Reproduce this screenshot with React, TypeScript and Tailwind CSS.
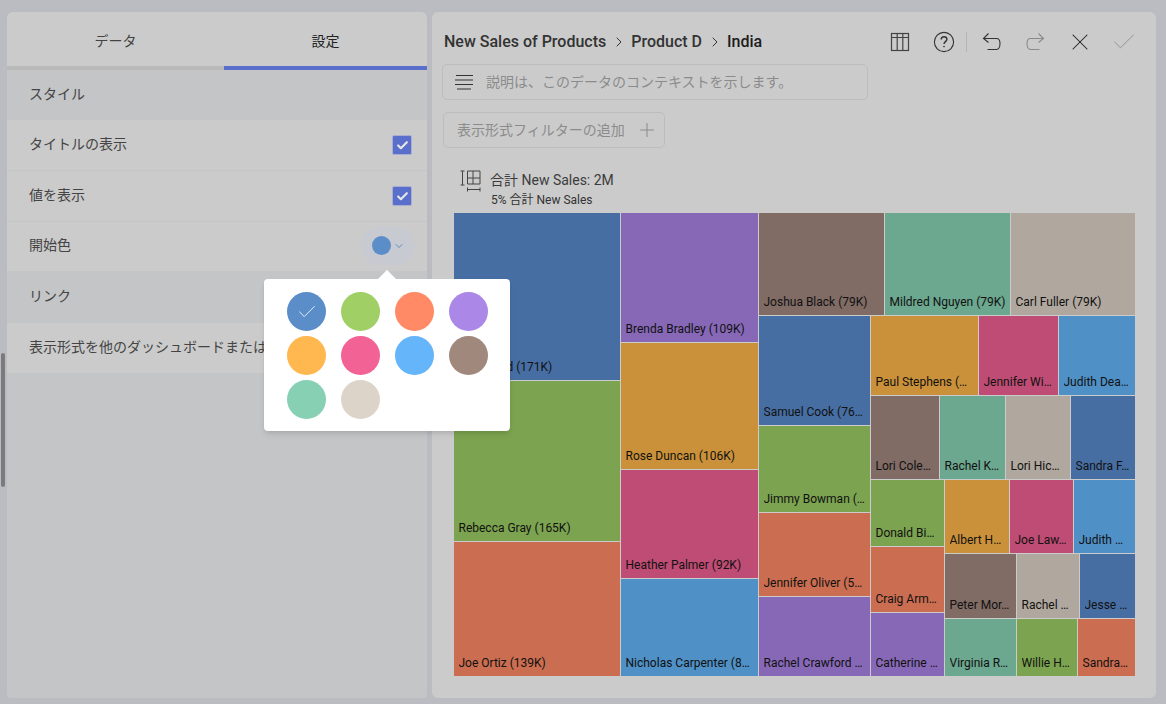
import { Check, ChevronDown, ChevronRight, Plus, X } from "lucide-react";

const BLUE = "bg-[#476ea3]";
const PURPLE = "bg-[#8768b7]";
const BROWN = "bg-[#806c65]";
const TEAL = "bg-[#6ca78f]";
const BEIGE = "bg-[#b0a89e]";
const ORANGE = "bg-[#cb913a]";
const PINK = "bg-[#bf4c74]";
const SKY = "bg-[#4f90c6]";
const GREEN = "bg-[#7ca34f]";
const RED = "bg-[#cb6d50]";

function Cell({ label, color, size }: { label: string; color: string; size: string }) {
  return (
    <div className={`${color} ${size} flex min-w-0 items-end overflow-hidden pb-[6px] pl-[4.5px] pr-[1px]`}>
      <span className="truncate text-[12px] leading-[14px] text-[#111]">{label}</span>
    </div>
  );
}

function Treemap() {
  return (
    <div className="flex h-[463px] w-[681px] gap-px">
      <div className="flex w-[166px] flex-col gap-px">
        <Cell label="Anna Ford (171K)" color={BLUE} size="h-[167px]" />
        <Cell label="Rebecca Gray (165K)" color={GREEN} size="h-[160px]" />
        <Cell label="Joe Ortiz (139K)" color={RED} size="flex-1" />
      </div>
      <div className="flex w-[137px] flex-col gap-px">
        <Cell label="Brenda Bradley (109K)" color={PURPLE} size="h-[129px]" />
        <Cell label="Rose Duncan (106K)" color={ORANGE} size="h-[126px]" />
        <Cell label="Heather Palmer (92K)" color={PINK} size="h-[108px]" />
        <Cell label="Nicholas Carpenter (8…" color={SKY} size="flex-1" />
      </div>
      <div className="flex flex-1 flex-col gap-px">
        <div className="flex h-[102px] gap-px">
          <Cell label="Joshua Black (79K)" color={BROWN} size="w-[125px]" />
          <Cell label="Mildred Nguyen (79K)" color={TEAL} size="w-[125px]" />
          <Cell label="Carl Fuller (79K)" color={BEIGE} size="flex-1" />
        </div>
        <div className="flex flex-1 gap-px">
          <div className="flex w-[111px] flex-col gap-px">
            <Cell label="Samuel Cook (76…" color={BLUE} size="h-[109px]" />
            <Cell label="Jimmy Bowman (…" color={GREEN} size="h-[86px]" />
            <Cell label="Jennifer Oliver (5…" color={RED} size="h-[83px]" />
            <Cell label="Rachel Crawford …" color={PURPLE} size="flex-1" />
          </div>
          <div className="flex flex-1 flex-col gap-px">
            <div className="flex h-[79px] gap-px">
              <Cell label="Paul Stephens (…" color={ORANGE} size="w-[107px]" />
              <Cell label="Jennifer Wi…" color={PINK} size="w-[79px]" />
              <Cell label="Judith Dea…" color={SKY} size="flex-1" />
            </div>
            <div className="flex h-[83px] gap-px">
              <Cell label="Lori Cole…" color={BROWN} size="w-[68px]" />
              <Cell label="Rachel K…" color={TEAL} size="w-[65px]" />
              <Cell label="Lori Hic…" color={BEIGE} size="w-[64px]" />
              <Cell label="Sandra F…" color={BLUE} size="flex-1" />
            </div>
            <div className="flex flex-1 gap-px">
              <div className="flex w-[73px] flex-col gap-px">
                <Cell label="Donald Bi…" color={GREEN} size="h-[66px]" />
                <Cell label="Craig Arm…" color={RED} size="h-[65px]" />
                <Cell label="Catherine …" color={PURPLE} size="flex-1" />
              </div>
              <div className="flex flex-1 flex-col gap-px">
                <div className="flex h-[73px] gap-px">
                  <Cell label="Albert H…" color={ORANGE} size="w-[64px]" />
                  <Cell label="Joe Law…" color={PINK} size="w-[63px]" />
                  <Cell label="Judith …" color={SKY} size="flex-1" />
                </div>
                <div className="flex h-[64px] gap-px">
                  <Cell label="Peter Mor…" color={BROWN} size="w-[71px]" />
                  <Cell label="Rachel …" color={BEIGE} size="w-[62px]" />
                  <Cell label="Jesse …" color={BLUE} size="flex-1" />
                </div>
                <div className="flex flex-1 gap-px">
                  <Cell label="Virginia R…" color={TEAL} size="w-[71px]" />
                  <Cell label="Willie H…" color={GREEN} size="w-[60px]" />
                  <Cell label="Sandra…" color={RED} size="flex-1" />
                </div>
              </div>
            </div>
          </div>
        </div>
      </div>
    </div>
  );
}

function SettingRow({ label, height, selected, children }: { label: string; height: string; selected?: boolean; children?: React.ReactNode }) {
  return (
    <div
      className={`${height} flex items-center justify-between pb-[2px] pl-[22px] pr-[13px] text-[14px] text-[#444] ${
        selected ? "bg-[#c4c5c7]" : "border-b border-[#c4c5c7] bg-[#cbcbcb]"
      }`}
    >
      <span className="whitespace-nowrap">{label}</span>
      {children}
    </div>
  );
}

function Tick() {
  return (
    <div className="mr-[2px] mt-[2px] flex h-[20px] w-[20px] items-center justify-center rounded-[2px] border border-[#a9aed0] bg-[#5a6fcb]">
      <Check size={13} strokeWidth={4} className="text-[#e6e6e6]" />
    </div>
  );
}

const swatches = ["bg-[#5b8ec9]", "bg-[#a0cf66]", "bg-[#ff8a65]", "bg-[#ab87e8]", "bg-[#ffb74f]", "bg-[#f26294]", "bg-[#64b5f9]", "bg-[#a1887d]", "bg-[#88d0b4]", "bg-[#ddd4c9]"];

function ColorPopover() {
  return (
    <div className="absolute left-[264px] top-[279px] z-10 w-[246px] rounded-[4px] bg-white pb-[12px] pl-[23px] pt-[13px] shadow-md">
      <div className="absolute left-[114px] top-[-9px] h-0 w-0 border-x-[9px] border-b-[9px] border-x-transparent border-b-white" />
      <div className="grid grid-cols-[39px_39px_39px_39px] gap-x-[15px] gap-y-[5px]">
        {swatches.map((color, i) => (
          <div key={color} className={`${color} flex h-[39px] w-[39px] items-center justify-center rounded-full`}>
            {i === 0 && <Check size={22} strokeWidth={0.9} className="text-white" />}
          </div>
        ))}
      </div>
    </div>
  );
}

function TableIcon() {
  return (
    <svg width="20" height="20" viewBox="0 0 20 20" fill="none" stroke="#444" strokeWidth="1.2">
      <rect x="1.5" y="1.5" width="17" height="17" />
      <path d="M1.5 5.5h17M7.2 1.5v17M12.8 1.5v17" />
    </svg>
  );
}

function HelpIcon() {
  return (
    <svg width="22" height="22" viewBox="0 0 22 22" fill="none" stroke="#333" strokeWidth="1.1">
      <circle cx="11" cy="11" r="9.6" />
      <path d="M8.2 8.6c0-1.7 1.3-2.8 2.9-2.8s2.8 1.1 2.8 2.5c0 2.3-2.9 2.4-2.9 4.7" strokeWidth="1.4" />
      <circle cx="11" cy="15.6" r=".8" fill="#333" stroke="none" />
    </svg>
  );
}

function UndoIcon({ flip, color }: { flip?: boolean; color: string }) {
  return (
    <svg width="20" height="20" viewBox="0 0 20 20" fill="none" stroke={color} strokeWidth="1.1" className={flip ? "-scale-x-100" : ""}>
      <path d="M6.5 1.5 1.5 6.5l5 4" />
      <path d="M1.5 6.5h13c2.2 0 3.500 2 3.500 5s-1.300 6-3.500 6H5.500" />
    </svg>
  );
}

function MenuIcon() {
  return (
    <svg width="18" height="16" viewBox="0 0 18 16" fill="none" stroke="#333" strokeWidth="1">
      <path d="M1 1.500h17M0 6h18M0 10.500h18M2 15h14" />
    </svg>
  );
}

function TreemapIcon() {
  return (
    <svg width="21" height="22" viewBox="0 0 21 22" fill="none" stroke="#444" strokeWidth="1">
      <path d="M.5 1h4M2.500 1v14M.5 15h4" />
      <path d="M7.500 1h12.500v13H7.500zM7.500 8h12.500M13 1v13" />
      <path d="M7.500 19.500h12.500M7.500 17.500v4M20 17.500v4" />
    </svg>
  );
}

export default function App() {
  return (
    <div
      className="relative flex h-[704px] w-[1166px] gap-[5px] overflow-hidden bg-[#bbbcc1] pb-[6px] pl-[7px] pr-[10px] pt-[12px]"
      style={{ fontFamily: 'Roboto, "Noto Sans CJK JP", sans-serif' }}
    >
      {/* scrollbar */}
      <div className="absolute left-[1px] top-[353px] h-[134px] w-[4px] rounded-full bg-[#7b7b7d]" />

      {/* Settings panel */}
      <div className="flex w-[420px] flex-col overflow-hidden rounded-t-[6px] rounded-b-[4px] bg-[#c4c5c7]">
        <div className="flex h-[58px] bg-[#cbcbcb] text-[14px]">
          <div className="flex w-[217px] items-center justify-center border-b-[4px] border-[#b9b9b9] pt-[4px] text-[#444]">データ</div>
          <div className="flex flex-1 items-center justify-center border-b-[4px] border-[#5a6fcb] pt-[4px] text-[#222]">設定</div>
        </div>
        <SettingRow label="スタイル" height="h-[50px]" selected />
        <SettingRow label="タイトルの表示" height="h-[51px]">
          <Tick />
        </SettingRow>
        <SettingRow label="値を表示" height="h-[51px]">
          <Tick />
        </SettingRow>
        <SettingRow label="開始色" height="h-[50px]">
          <div className="-mr-[1px] flex h-[38px] w-[54px] items-center justify-center gap-[2px] rounded-full bg-[#c8cad2]">
            <span className="h-[19px] w-[19px] rounded-full bg-[#5b8ec9]" />
            <ChevronDown size={12} strokeWidth={2} className="text-[#5b8ec9]" />
          </div>
        </SettingRow>
        <SettingRow label="リンク" height="h-[51px]" selected />
        <div className="flex h-[50px] items-center overflow-hidden whitespace-nowrap bg-[#cbcbcb] pb-[2px] pl-[22px] text-[14px] text-[#444]">
          表示形式を他のダッシュボードまたは
        </div>
      </div>

      {/* Visualization editor */}
      <div className="flex flex-1 flex-col rounded-[6px] bg-[#cbcbcb] pl-[11px]">
        <div className="flex h-[52px] items-center justify-between pr-[18px] pt-[8px]">
          <div className="flex items-center pl-[1px] text-[16px] font-medium">
            <span className="text-[#333]">New Sales of Products</span>
            <ChevronRight size={16} strokeWidth={1.5} className="mx-[4.5px] text-[#333]" />
            <span className="text-[#333]">Product D</span>
            <ChevronRight size={16} strokeWidth={1.5} className="mx-[4.5px] text-[#333]" />
            <span className="text-[#1c1c1c]">India</span>
          </div>
          <div className="flex items-center">
            <TableIcon />
            <div className="ml-[23px]">
              <HelpIcon />
            </div>
            <div className="ml-[11px] h-[20px] w-px bg-[#b5b5b5]" />
            <div className="ml-[15px]">
              <UndoIcon color="#333" />
            </div>
            <div className="ml-[23px]">
              <UndoIcon flip color="#8a8a8a" />
            </div>
            <X size={28} strokeWidth={0.9} className="ml-[21px] text-[#222]" />
            <Check size={28} strokeWidth={0.8} className="ml-[16px] text-[#8f8f8f]" />
          </div>
        </div>
        <div className="-ml-px flex h-[36px] w-[426px] items-center rounded-[5px] border border-[#bdbdbd] pl-[12px] text-[14px] text-[#8b8b8b]">
          <MenuIcon />
          <span className="ml-[13px]">説明は、このデータのコンテキストを示します。</span>
        </div>
        <div className="mt-[12px] flex h-[36px] w-[222px] items-center rounded-[5px] border border-[#bdbdbd] pl-[13px] text-[14px] text-[#8b8b8b]">
          <span>表示形式フィルターの追加</span>
          <Plus size={22} strokeWidth={1.1} className="ml-[11px]" />
        </div>
        <div className="ml-[17px] mt-[19px] flex h-[46px] gap-[9px]">
          <div className="pt-[3px]">
            <TreemapIcon />
          </div>
          <div>
            <div className="pt-[2px] text-[14px] leading-[22px] text-[#3c3c3c]">合計 New Sales: 2M</div>
            <div className="ml-px mt-[1px] text-[12px] leading-[17px] text-[#333]">5% 合計 New Sales</div>
          </div>
        </div>
        <div className="ml-[11px]">
          <Treemap />
        </div>
      </div>

      <ColorPopover />
    </div>
  );
}
